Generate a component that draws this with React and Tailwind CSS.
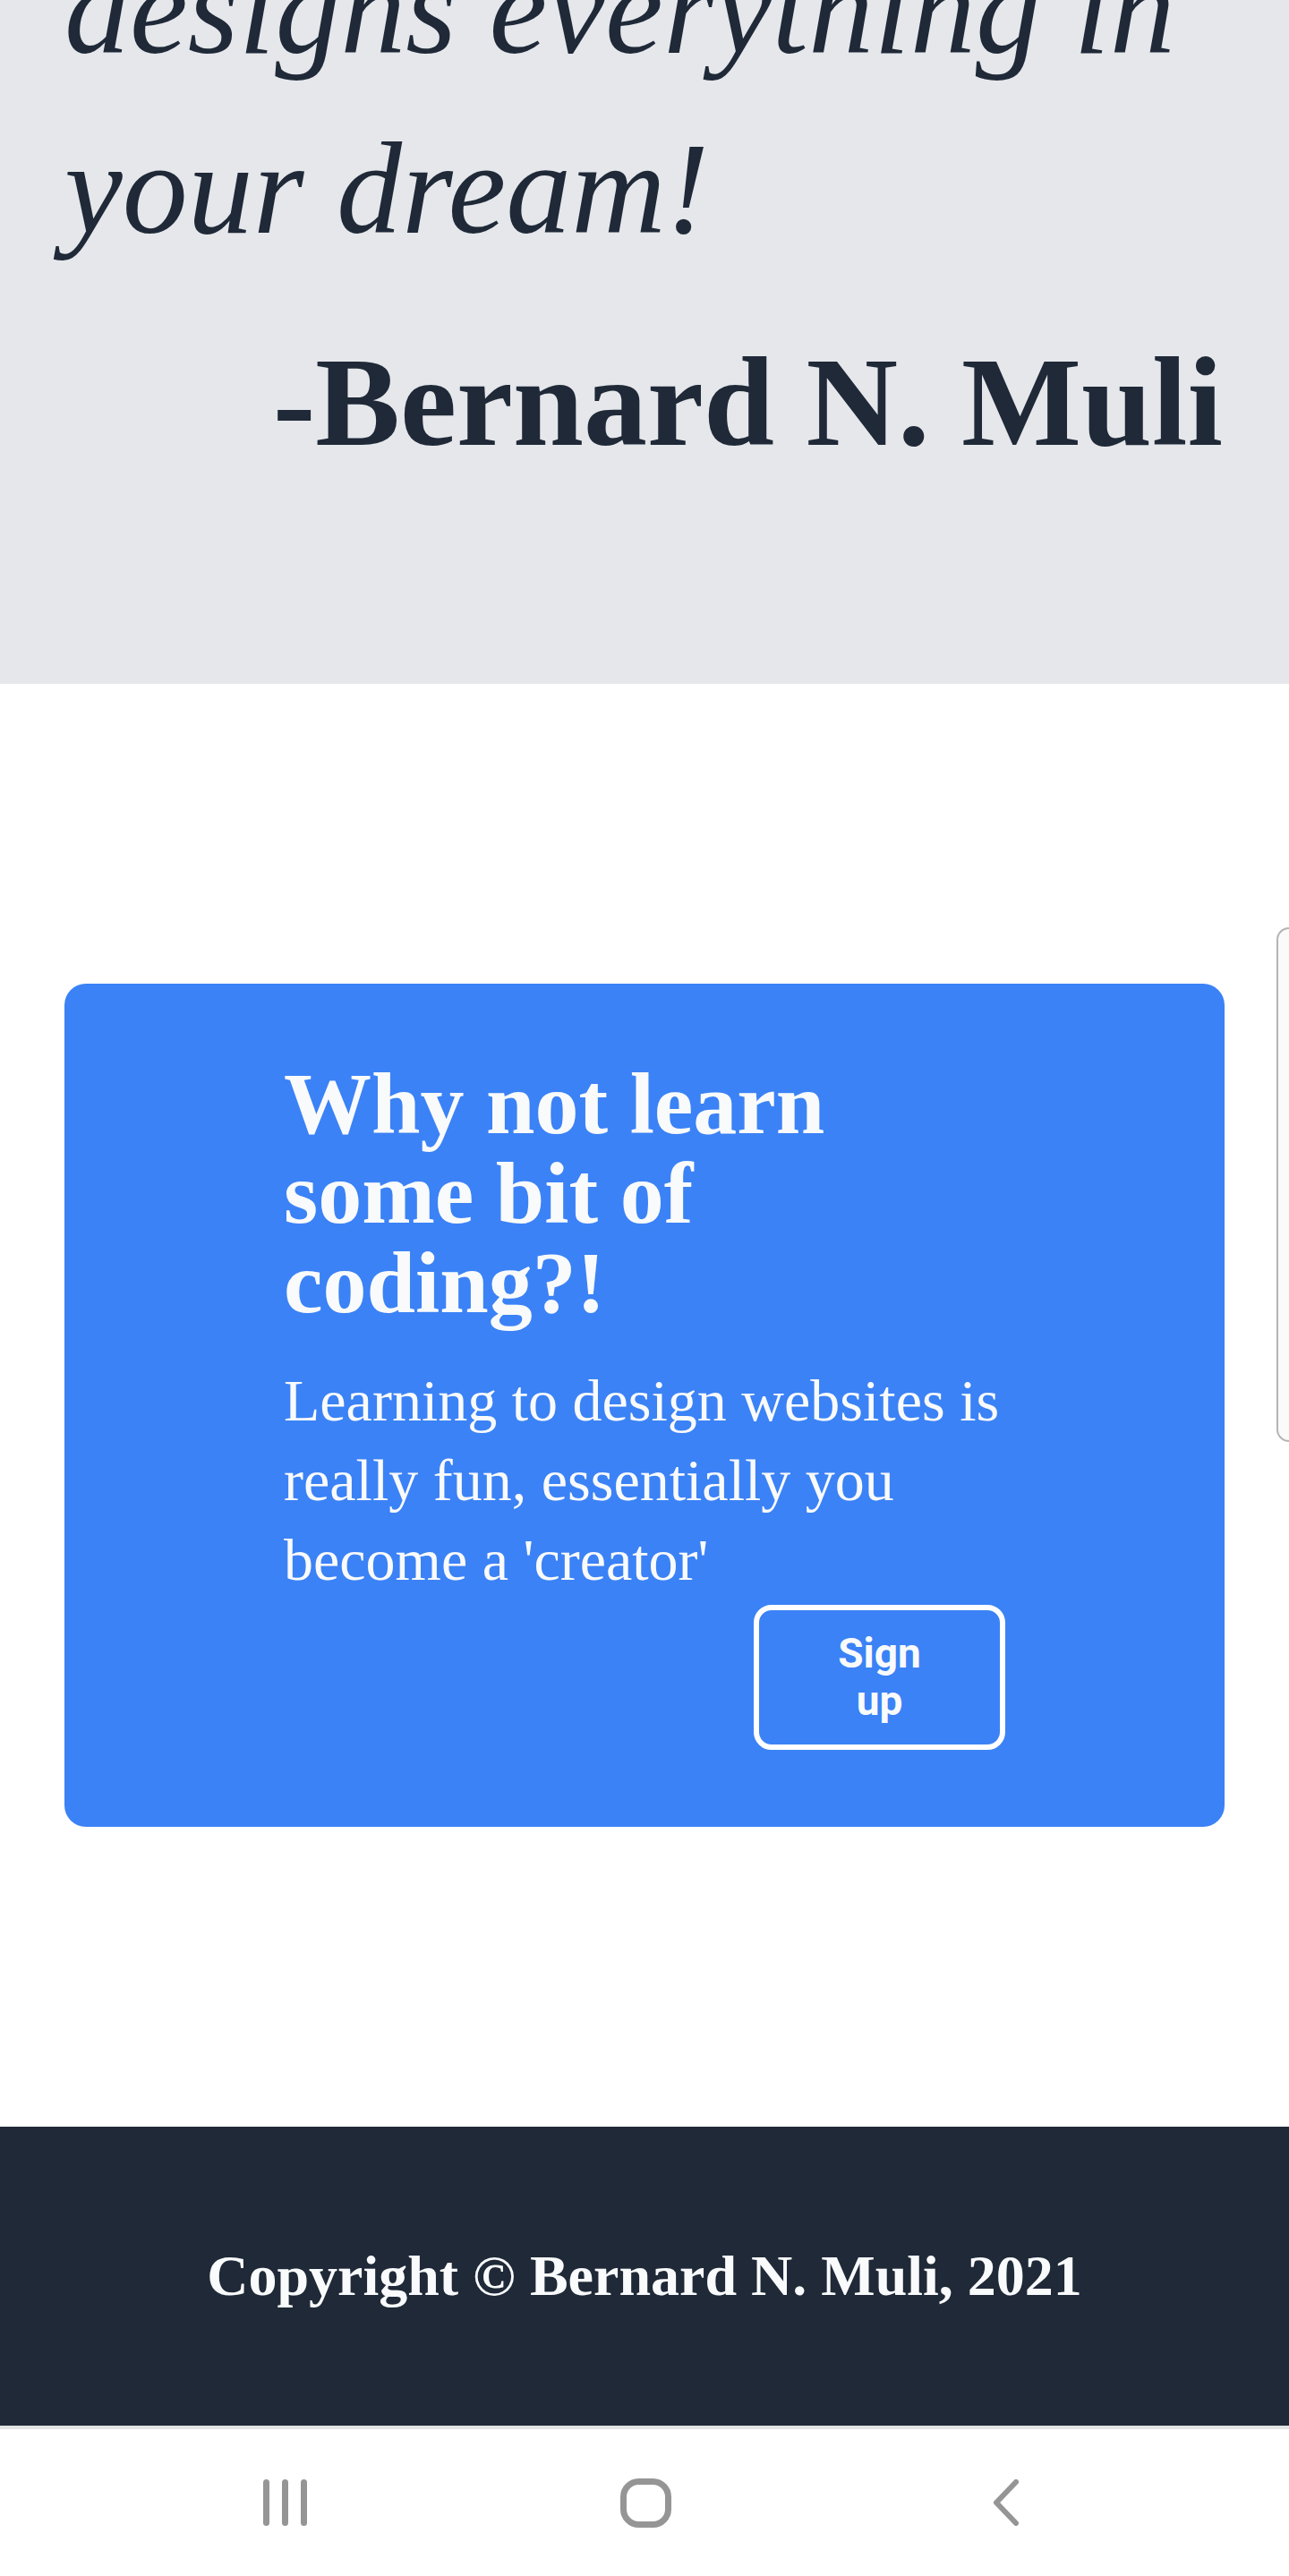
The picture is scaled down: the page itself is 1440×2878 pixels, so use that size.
export default function App() {
  return (
    <div className="relative w-[1440px] bg-white overflow-hidden font-['Liberation_Serif',serif]">
      {/* Quote section */}
      <section className="h-[764px] overflow-hidden bg-[#e5e7eb] pl-[72px] pr-[74px] text-[#1f2937]">
        <p className="-mt-[90px] italic text-[146px] leading-[201px]">
          designs everything in
          <br />
          your dream!
        </p>
        <p className="mt-[53px] text-right font-bold text-[142px] leading-[169px]">
          -Bernard N. Muli
        </p>
      </section>

      {/* Call to action */}
      <section className="bg-white px-[72px] py-[335px]">
        <div className="rounded-[24px] bg-[#3b82f6] px-[245px] pt-[84px] pb-[86px] text-[#f9fafb]">
          <h2 className="font-bold text-[98px] leading-[100px]">
            Why not learn
            <br />
            some bit of
            <br />
            coding?!
          </h2>
          <p className="mt-[37px] text-[66px] leading-[89px]">
            Learning to design websites is
            <br />
            really fun, essentially you
            <br />
            become a 'creator'
          </p>
          <div className="mt-[6px] flex justify-end">
            <button className="w-[281px] rounded-[20px] border-[6px] border-white py-[22px] text-center font-['Roboto',sans-serif] font-bold text-[46px] leading-[53px] text-[#f9fafb]">
              Sign
              <br />
              up
            </button>
          </div>
        </div>
      </section>

      {/* Footer */}
      <footer className="flex h-[334px] items-center justify-center bg-[#1f2937]">
        <p className="font-bold text-[64px] leading-[70px] text-[#f9fafb]">
          Copyright © Bernard N. Muli, 2021
        </p>
      </footer>

      {/* Android navigation bar */}
      <div className="h-[4px] bg-[#e2e4e3]" />
      <div className="flex h-[164px] items-center bg-white pl-[118px]">
        <div className="flex w-[402px] items-center justify-center">
          <svg width="50" height="52" viewBox="0 0 50 52" fill="#959595">
            <rect x="0" y="0" width="7" height="52" rx="3.5" />
            <rect x="21" y="0" width="7" height="52" rx="3.5" />
            <rect x="42" y="0" width="7" height="52" rx="3.5" />
          </svg>
        </div>
        <div className="flex w-[402px] items-center justify-center">
          <svg width="57" height="55" viewBox="0 0 57 55" fill="none">
            <rect x="3.5" y="3.5" width="50" height="48" rx="17" stroke="#959595" strokeWidth="7" />
          </svg>
        </div>
        <div className="flex w-[402px] items-center justify-center">
          <svg width="34" height="52" viewBox="0 0 34 52" fill="none">
            <polyline
              points="29,3 7,26 29,49"
              stroke="#959595"
              strokeWidth="6"
              strokeLinecap="round"
              strokeLinejoin="round"
            />
          </svg>
        </div>
      </div>

      {/* Edge panel handle overlay */}
      <div className="absolute left-[1426px] top-[1036px] h-[575px] w-[40px] rounded-l-[14px] border-2 border-r-0 border-[#b4b4b4] bg-[#fafafa]" />
    </div>
  );
}
